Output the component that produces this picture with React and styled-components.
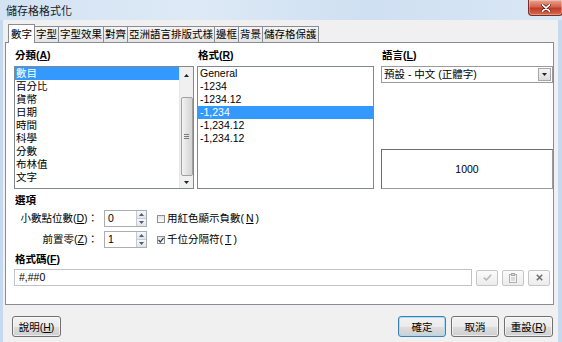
import React from "react";
import styled, { createGlobalStyle } from "styled-components";

const FONT = `"Liberation Sans", "Noto Sans CJK TC", sans-serif`;

const GlobalStyle = createGlobalStyle`
  html, body { margin: 0; padding: 0; background: #f0f0f0; }
  body { font-family: ${FONT}; font-size: 10.5px; color: #000; }
  * { box-sizing: border-box; }
`;

const Window = styled.div`
  width: 562px;
  height: 342px;
  display: flex;
  flex-direction: column;
  background: #c7d9ee;
  overflow: hidden;
`;

const TitleBar = styled.div`
  height: 20px;
  flex: none;
  display: flex;
  align-items: flex-start;
  background: linear-gradient(90deg, #d3e3f4 0%, #dde9f6 35%, #cfe0f2 65%, #d9e6f5 100%);
`;

const Title = styled.div`
  padding-left: 6px;
  line-height: 23px;
  font-size: 11px;
  color: #1b1b1b;
`;

const CloseButton = styled.div`
  margin-left: auto;
  margin-right: -1px;
  width: 35px;
  height: 16px;
  display: flex;
  align-items: center;
  justify-content: center;
  border: 1px solid #7a2d22;
  border-top: none;
  border-radius: 0 0 4px 4px;
  background: linear-gradient(#e9a493 0%, #d5624e 45%, #c13c26 55%, #d56a4f 100%);
  box-shadow: inset 0 0 0 1px rgba(255, 255, 255, 0.3);
`;

const Body = styled.div`
  flex: 1;
  display: flex;
  flex-direction: column;
  margin: 0 4px 0 3px;
  padding: 4px 4px 0 2px;
  background: #f0f0f0;
`;

const TabStrip = styled.div`
  display: flex;
  align-items: flex-end;
  height: 19px;
  padding-left: 3px;
  margin-bottom: -1px;
  position: relative;
  z-index: 1;
`;

const Tab = styled.div`
  flex: none;
  height: ${(p) => (p.$active ? 19 : 16)}px;
  margin-bottom: ${(p) => (p.$active ? 0 : 1)}px;
  margin-left: -1px;
  padding: ${(p) => (p.$active ? "2px 2px 0" : "0 1px")};
  border: 1px solid #898c95;
  border-bottom: none;
  line-height: 14px;
  white-space: nowrap;
  background: ${(p) => (p.$active ? "#fff" : "linear-gradient(#f4f4f4, #e4e4e4)")};
  &:first-child { margin-left: 0; }
`;

const Panel = styled.div`
  height: 263px;
  flex: none;
  display: flex;
  flex-direction: column;
  background: #fff;
  border: 1px solid #898c95;
  padding: 5px 0 0 8px;
`;

const TopGrid = styled.div`
  display: grid;
  grid-template-columns: 180px 177px 176px;
  column-gap: 3px;
`;

const Column = styled.div`
  display: flex;
  flex-direction: column;
  padding-left: ${(p) => p.$indent || 0}px;
`;

const FieldLabel = styled.div`
  height: 14px;
  line-height: 14px;
  margin-bottom: ${(p) => (p.$mb === undefined ? 4 : p.$mb)}px;
  margin-top: ${(p) => p.$mt || 0}px;
  padding-left: 1px;
  font-weight: bold;
  white-space: nowrap;
`;

const ListBox = styled.div`
  height: 123px;
  display: flex;
  border: 1px solid #828790;
  background: #fff;
`;

const ItemList = styled.div`
  flex: 1;
  display: flex;
  flex-direction: column;
`;

const Item = styled.div`
  height: 13px;
  line-height: 13px;
  padding-left: ${(p) => p.$pad}px;
  white-space: nowrap;
  background: ${(p) => (p.$selected ? "#3399ff" : "transparent")};
  color: ${(p) => (p.$selected ? "#fff" : "#000")};
`;

const ScrollBar = styled.div`
  width: 14px;
  display: flex;
  flex-direction: column;
  background: #f0f0f0;
  border-left: 1px solid #e6e6e6;
`;

const ScrollArrow = styled.div`
  height: ${(p) => p.$h}px;
  display: flex;
  align-items: center;
  justify-content: center;
`;

const Track = styled.div`
  flex: 1;
  display: flex;
  flex-direction: column;
  justify-content: flex-end;
  align-items: center;
`;

const Thumb = styled.div`
  width: 12px;
  height: 79px;
  border: 1px solid #a1a1a1;
  border-radius: 2px;
  background: linear-gradient(90deg, #f3f3f3, #e2e2e2 50%, #d4d4d4);
  display: flex;
  align-items: center;
  justify-content: center;
`;

const Dropdown = styled.div`
  height: 17px;
  display: flex;
  align-items: stretch;
  border: 1px solid #9a9a9a;
  background: #fff;
`;

const DropText = styled.div`
  flex: 1;
  padding-left: 2px;
  line-height: 15px;
  white-space: nowrap;
`;

const DropButton = styled.div`
  width: 13px;
  margin: 1px;
  display: flex;
  align-items: center;
  justify-content: center;
  border: 1px solid #a7a7a7;
  background: linear-gradient(#f4f4f4, #dcdcdc);
`;

const Preview = styled.div`
  margin-top: auto;
  height: 40px;
  display: flex;
  align-items: center;
  justify-content: center;
  border: 1px solid #9b9b9b;
  border-top-color: #6e6e6e;
  border-left-color: #6e6e6e;
  background: #fff;
`;

const OptionsGrid = styled.div`
  display: grid;
  grid-template-columns: 84px 43px auto;
  grid-auto-rows: 17px;
  column-gap: 6px;
  row-gap: 4px;
  margin-top: 3px;
  align-items: center;
`;

const OptLabel = styled.div`
  text-align: right;
  line-height: 17px;
  white-space: nowrap;
`;

const SpinBox = styled.div`
  height: 17px;
  display: flex;
  border: 1px solid #abadb3;
  background: #fff;
`;

const SpinValue = styled.div`
  flex: 1;
  padding-left: 3px;
  line-height: 15px;
`;

const SpinButtons = styled.div`
  width: 10px;
  display: flex;
  flex-direction: column;
  border-left: 1px solid #c5cad2;
`;

const SpinHalf = styled.div`
  flex: 1;
  display: flex;
  align-items: center;
  justify-content: center;
  background: linear-gradient(#f6f8fa, #e0e5eb);
  & + & { border-top: 1px solid #c5cad2; }
`;

const CheckOption = styled.label`
  display: flex;
  align-items: center;
  gap: 2px;
  margin-left: 4px;
  white-space: nowrap;
  line-height: 17px;
`;

const CheckBox = styled.span`
  width: 8px;
  height: 8px;
  display: inline-flex;
  align-items: center;
  justify-content: center;
  border: 1px solid #8f8f8f;
  background: linear-gradient(#e4e4e4, #fbfbfb);
`;

const FormatRow = styled.div`
  display: flex;
  align-items: center;
  gap: 4px;
  margin-top: 3px;
`;

const CodeInput = styled.div`
  width: 458px;
  height: 17px;
  border: 1px solid #c0c3c8;
  padding-left: 4px;
  line-height: 15px;
  background: #fff;
`;

const IconButton = styled.div`
  width: 22px;
  height: 16px;
  display: flex;
  align-items: center;
  justify-content: center;
  border: 1px solid #c6c6c6;
  border-radius: 2px;
  background: linear-gradient(#fbfbfb, #ececec);
`;

const ButtonRow = styled.div`
  display: flex;
  align-items: center;
  gap: 5px;
  margin-top: 11px;
  padding: 0 1px 0 7px;
`;

const Spacer = styled.div`
  flex: 1;
`;

const Button = styled.div`
  width: ${(p) => p.$w}px;
  height: 21px;
  display: flex;
  align-items: center;
  justify-content: center;
  border: 1px solid ${(p) => (p.$default ? "#3c7fb1" : "#707070")};
  border-radius: 3px;
  background: linear-gradient(#f2f2f2 0%, #ebebeb 50%, #dddddd 51%, #cfcfcf 100%);
  box-shadow: inset 0 0 0 1px ${(p) => (p.$default ? "#a6dcf5" : "rgba(255,255,255,0.6)")};
  white-space: nowrap;
`;

const UpTri = ({ color = "#222" }) => (
  <svg width="5" height="3" viewBox="0 0 5 3"><path d="M0 3 L2.5 0 L5 3Z" fill={color} /></svg>
);
const DownTri = ({ color = "#222" }) => (
  <svg width="5" height="3" viewBox="0 0 5 3"><path d="M0 0 L5 0 L2.5 3Z" fill={color} /></svg>
);

const categories = ["數目", "百分比", "貨幣", "日期", "時間", "科學", "分數", "布林值", "文字"];
const formats = ["General", "-1234", "-1234.12", "-1,234", "-1,234.12", "-1,234.12"];
const tabs = ["數字", "字型", "字型效果", "對齊", "亞洲語言排版式樣", "邊框", "背景", "儲存格保護"];

export default function App() {
  return (
    <>
      <GlobalStyle />
      <Window>
        <TitleBar>
          <Title>儲存格格式化</Title>
          <CloseButton>
            <svg width="10" height="8" viewBox="0 0 10 8">
              <path d="M1.5 0.8 L8.5 7.2 M8.5 0.8 L1.5 7.2" stroke="#5a1a12" strokeWidth="3" strokeLinecap="round" />
              <path d="M1.5 0.8 L8.5 7.2 M8.5 0.8 L1.5 7.2" stroke="#fff" strokeWidth="1.7" strokeLinecap="round" />
            </svg>
          </CloseButton>
        </TitleBar>
        <Body>
          <TabStrip>
            {tabs.map((t, i) => (
              <Tab key={t} $active={i === 0}>{t}</Tab>
            ))}
          </TabStrip>
          <Panel>
            <TopGrid>
              <Column>
                <FieldLabel>分類(<u>A</u>)</FieldLabel>
                <ListBox>
                  <ItemList>
                    {categories.map((c, i) => (
                      <Item key={c} $pad={1} $selected={i === 0}>{c}</Item>
                    ))}
                  </ItemList>
                  <ScrollBar>
                    <ScrollArrow $h={17}><UpTri /></ScrollArrow>
                    <Track>
                      <Thumb>
                        <svg width="5" height="5" viewBox="0 0 5 5">
                          <path d="M0 0.5 H5 M0 2.5 H5 M0 4.5 H5" stroke="#7a7a7a" strokeWidth="1" />
                        </svg>
                      </Thumb>
                    </Track>
                    <ScrollArrow $h={12}><DownTri /></ScrollArrow>
                  </ScrollBar>
                </ListBox>
              </Column>
              <Column>
                <FieldLabel>格式(<u>R</u>)</FieldLabel>
                <ListBox>
                  <ItemList>
                    {formats.map((f, i) => (
                      <Item key={i} $pad={2} $selected={i === 3}>{f}</Item>
                    ))}
                  </ItemList>
                </ListBox>
              </Column>
              <Column $indent={4}>
                <FieldLabel>語言(<u>L</u>)</FieldLabel>
                <Dropdown>
                  <DropText>預設 - 中文 (正體字)</DropText>
                  <DropButton><DownTri /></DropButton>
                </Dropdown>
                <Preview>1000</Preview>
              </Column>
            </TopGrid>

            <FieldLabel $mt={4} $mb={0}>選項</FieldLabel>
            <OptionsGrid>
              <OptLabel>小數點位數(<u>D</u>)：</OptLabel>
              <SpinBox>
                <SpinValue>0</SpinValue>
                <SpinButtons>
                  <SpinHalf><UpTri color="#4f5d6e" /></SpinHalf>
                  <SpinHalf><DownTri color="#4f5d6e" /></SpinHalf>
                </SpinButtons>
              </SpinBox>
              <CheckOption>
                <CheckBox />
                用紅色顯示負數(<u>N</u>)
              </CheckOption>

              <OptLabel>前置零(<u>Z</u>)：</OptLabel>
              <SpinBox>
                <SpinValue>1</SpinValue>
                <SpinButtons>
                  <SpinHalf><UpTri color="#4f5d6e" /></SpinHalf>
                  <SpinHalf><DownTri color="#4f5d6e" /></SpinHalf>
                </SpinButtons>
              </SpinBox>
              <CheckOption>
                <CheckBox>
                  <svg width="6" height="6" viewBox="0 0 6 6">
                    <path d="M0.5 3 L2.3 5 L5.5 0.8" stroke="#2b3a4d" strokeWidth="1.2" fill="none" />
                  </svg>
                </CheckBox>
                千位分隔符(<u>T</u>)
              </CheckOption>
            </OptionsGrid>

            <FieldLabel $mt={4} $mb={0}>格式碼(<u>F</u>)</FieldLabel>
            <FormatRow>
              <CodeInput>#,##0</CodeInput>
              <IconButton>
                <svg width="9" height="7" viewBox="0 0 9 7">
                  <path d="M0.8 3.6 L3.3 6 L8.2 0.8" stroke="#b8b8b8" strokeWidth="1.6" fill="none" />
                </svg>
              </IconButton>
              <IconButton>
                <svg width="8" height="10" viewBox="0 0 8 10">
                  <rect x="0.5" y="1.5" width="7" height="8" fill="#f4f4f4" stroke="#b0b0b0" />
                  <rect x="2.5" y="0.5" width="3" height="2" fill="#d8d8d8" stroke="#a8a8a8" />
                  <path d="M2 5 H6 M2 7 H6" stroke="#c0c0c0" />
                </svg>
              </IconButton>
              <IconButton>
                <svg width="7" height="7" viewBox="0 0 7 7">
                  <path d="M0.8 0.8 L6.2 6.2 M6.2 0.8 L0.8 6.2" stroke="#6f6f6f" strokeWidth="1.6" />
                </svg>
              </IconButton>
            </FormatRow>
          </Panel>

          <ButtonRow>
            <Button $w={49}>說明(<u>H</u>)</Button>
            <Spacer />
            <Button $w={48} $default>確定</Button>
            <Button $w={48}>取消</Button>
            <Button $w={49}>重設(<u>R</u>)</Button>
          </ButtonRow>
        </Body>
      </Window>
    </>
  );
}
